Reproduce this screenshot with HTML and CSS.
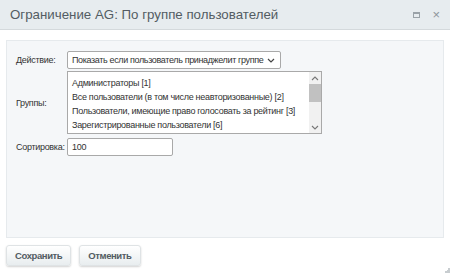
FILE: index.html
```html
<!DOCTYPE html>
<html lang="ru">
<head>
  <meta charset="UTF-8" />
  <title>Ограничение AG</title>
  <link rel="stylesheet" href="styles.css">
</head>
<body>
  <div class="dialog">
    <header class="titlebar">
      <span class="title">Ограничение AG: По группе пользователей</span>
      <span class="tools">
        <span class="tool-max"></span>
        <span class="tool-close">&times;</span>
      </span>
    </header>

    <div class="content">
      <div class="panel">
        <div class="row">
          <label class="label">Действие:</label>
          <div class="select">
            <span>Показать если пользователь принаджелит группе</span>
            <svg width="8" height="5" viewBox="0 0 8 5"><path d="M1 1l3 3 3-3" fill="none" stroke="#444" stroke-width="1.2"/></svg>
          </div>
        </div>
        <div class="row">
          <label class="label">Группы:</label>
          <div class="listbox">
            <ul class="options">
              <li>Администраторы [1]</li>
              <li>Все пользователи (в том числе неавторизованные) [2]</li>
              <li>Пользователи, имеющие право голосовать за рейтинг [3]</li>
              <li>Зарегистрированные пользователи [6]</li>
            </ul>
            <div class="scrollbar">
              <svg width="8" height="5" viewBox="0 0 8 5"><path d="M1 4l3-3 3 3" fill="none" stroke="#777" stroke-width="1.1"/></svg>
              <div class="thumb"></div>
              <div class="track"></div>
              <svg width="8" height="5" viewBox="0 0 8 5"><path d="M1 1l3 3 3-3" fill="none" stroke="#777" stroke-width="1.1"/></svg>
            </div>
          </div>
        </div>
        <div class="row row-sort">
          <label class="label">Сортировка:</label>
          <div class="input">100</div>
        </div>
      </div>
    </div>

    <footer class="buttons">
      <button class="btn">Сохранить</button>
      <button class="btn">Отменить</button>
    </footer>
    <div class="grip"></div>
  </div>
</body>
</html>
```

FILE: styles.css
```css
* {
  margin: 0;
  padding: 0;
  box-sizing: border-box;
}
body {
  background: #fff;
  font-family: "Liberation Sans", Arial, sans-serif;
  color: #333;
  width: 450px;
  height: 273px;
  overflow: hidden;
}
.dialog {
  position: relative;
  height: 273px;
  display: flex;
  flex-direction: column;
}
/* Title bar */
.titlebar {
  height: 30px;
  background: #e7ecef;
  border-bottom: 1px solid #d4d9dc;
  display: flex;
  align-items: center;
  justify-content: space-between;
  padding: 0 10px 0 10px;
}
.title {
  font-size: 13.3px;
  color: #535c63;
}
.tools {
  display: flex;
  align-items: center;
  gap: 12px;
}
.tool-max {
  width: 7px;
  height: 6px;
  border: 1px solid #9aa2a8;
  border-top-width: 2px;
}
.tool-close {
  font-size: 13px;
  color: #8d959b;
  line-height: 1;
}
/* Content */
.content {
  padding: 10px 6px 0 6px;
}
.panel {
  height: 198px;
  background: #f5f7f9;
  border: 1px solid #e6eaed;
  padding: 10px 0 0 9px;
  display: flex;
  flex-direction: column;
  gap: 2px;
}
.row {
  display: flex;
  align-items: center;
  font-size: 9px;
  letter-spacing: -0.3px;
}
.row-sort {
  margin-top: 2px;
}
.label {
  width: 51px;
  color: #333;
  white-space: nowrap;
}
.select {
  width: 214px;
  height: 18px;
  background: #fff;
  border: 1px solid #a9a9a9;
  border-radius: 2px;
  display: flex;
  align-items: center;
  justify-content: space-between;
  padding: 0 5px 0 4px;
  white-space: nowrap;
  letter-spacing: -0.36px;
  color: #333;
}
.listbox {
  width: 255px;
  height: 63px;
  background: #fff;
  border: 1px solid #a9a9a9;
  display: flex;
}
.options {
  list-style: none;
  flex: 1;
  padding: 3.5px 0 0 4px;
  overflow: hidden;
}
.options li {
  height: 14.2px;
  line-height: 14.2px;
  white-space: nowrap;
  color: #333;
}
.scrollbar {
  width: 12px;
  background: #f1f1f1;
  display: flex;
  flex-direction: column;
  align-items: center;
}
.scrollbar svg {
  margin: 4px 0 3px 0;
}
.thumb {
  width: 12px;
  height: 18px;
  background: #c1c1c1;
}
.track {
  flex: 1;
}
.input {
  width: 106px;
  height: 18px;
  background: #fff;
  border: 1px solid #a9a9a9;
  border-radius: 2px;
  padding: 0 4px;
  line-height: 16px;
}
/* Buttons */
.buttons {
  display: flex;
  gap: 8px;
  padding: 7px 6px 0 6px;
}
.btn {
  height: 21px;
  padding: 0 8px;
  font-family: "Liberation Sans", Arial, sans-serif;
  font-size: 9.5px;
  font-weight: bold;
  letter-spacing: -0.4px;
  color: #535c63;
  background: linear-gradient(#fff, #e8edef);
  border: 1px solid #dfe3e5;
  border-radius: 3px;
  box-shadow: 0 1px 2px rgba(0, 0, 0, 0.18);
}
.grip {
  position: absolute;
  right: 0;
  bottom: 0;
  width: 6px;
  height: 6px;
  background: linear-gradient(135deg, transparent 50%, #c8cdd0 50%);
}
```
